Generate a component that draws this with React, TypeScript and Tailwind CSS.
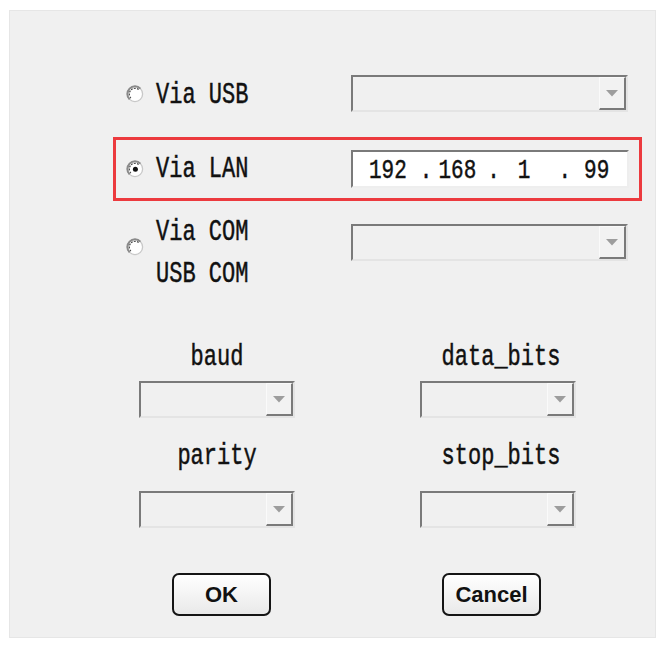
import React from "react";

const mono = "font-['Liberation_Mono','DejaVu_Sans_Mono',monospace] text-[22px] text-[#111] [-webkit-text-stroke:0.35px_#111]";

function Radio({ checked = false }: { checked?: boolean }) {
  return (
    <svg width="18" height="18" viewBox="0 0 18 18" className="shrink-0">
      <circle cx="9" cy="9" r="7.6" fill="#ffffff" stroke="#c8c8c8" strokeWidth="1.3" />
      <path d="M3.6 14.4 A7.6 7.6 0 0 1 14.4 3.6" stroke="#8a8a8a" strokeWidth="2" fill="none" />
      <path d="M4.9 13.1 A5.8 5.8 0 0 1 13.1 4.9" stroke="#3f3f3f" strokeWidth="1.1" fill="none" strokeDasharray="1.8 1.2" />
      {checked && <circle cx="9.4" cy="9.2" r="2.5" fill="#111" />}
    </svg>
  );
}

function Combo({ w }: { w: string }) {
  return (
    <div className={`${w} h-[37px] flex border-2 border-t-[#7a7a7a] border-l-[#7a7a7a] border-b-[#e4e4e4] border-r-[#e4e4e4] bg-[#f0f0f0]`}>
      <div className="flex-1" />
      <div className="w-[27px] h-full flex items-center justify-center border-t border-l border-t-[#fafafa] border-l-[#fafafa] border-b-2 border-r-2 border-b-[#7a7a7a] border-r-[#7a7a7a] bg-[#f2f2f2]">
        <svg width="12" height="7" viewBox="0 0 12 7">
          <polygon points="0,0 12,0 6,6.5" fill="#9d9d9d" />
        </svg>
      </div>
    </div>
  );
}

function Btn({ label }: { label: string }) {
  return (
    <div className="w-[99px] h-[43px] rounded-[7px] border-2 border-[#151515] bg-gradient-to-b from-[#ffffff] to-[#e9e9e9] flex items-center justify-center font-['Liberation_Sans',Arial,sans-serif] font-bold text-[22px] text-[#111] [-webkit-text-stroke:0px]">
      {label}
    </div>
  );
}

function T({ children }: { children: React.ReactNode }) {
  return <span className="inline-block scale-y-[1.3] whitespace-pre">{children}</span>;
}

export default function App() {
  return (
    <div className="w-[664px] h-[654px] bg-white pt-[10px] pl-[9px]">
      <div className={`w-[647px] h-[628px] bg-[#f0f0f0] border border-[#e6e6e6] ${mono}`}>
        <div className="pt-[64px] pl-[103px] w-[632px]">
          {/* USB row */}
          <div className="flex items-center h-[37px] pl-[13px] pr-[14px]">
            <Radio />
            <div className="ml-[12px] leading-none mt-[6px]"><T>Via USB</T></div>
            <div className="ml-auto">
              <Combo w="w-[277px]" />
            </div>
          </div>

          {/* LAN row */}
          <div className="mt-[25px] h-[64px] border-[3px] border-[#ec3a3e] flex items-center pl-[10px] pr-[10px]">
            <Radio checked />
            <div className="ml-[12px] leading-none mt-[4px]"><T>Via LAN</T></div>
            <div className="ml-auto w-[278px] h-[38px] bg-white border-2 border-t-[#7a7a7a] border-l-[#7a7a7a] border-b-[#eeeeee] border-r-[#eeeeee] flex items-center leading-none pt-[3px] text-[21px]">
              <span className="ml-[16px]"><T>192</T></span>
              <span className="ml-[13px]"><T>.</T></span>
              <span className="ml-[6px]"><T>168</T></span>
              <span className="ml-[11px]"><T>.</T></span>
              <span className="ml-[18px]"><T>1</T></span>
              <span className="ml-[28px]"><T>.</T></span>
              <span className="ml-[13px]"><T>99</T></span>
            </div>
          </div>

          {/* COM row */}
          <div className="mt-[12px] flex items-start pl-[13px] pr-[14px]">
            <div className="mt-[25px]"><Radio /></div>
            <div className="ml-[12px] leading-[42px]">
              <div><T>Via COM</T></div>
              <div><T>USB COM</T></div>
            </div>
            <div className="ml-auto mt-[11px]">
              <Combo w="w-[277px]" />
            </div>
          </div>
        </div>

        {/* serial settings */}
        <div className="mt-[44px] pl-[129px] grid grid-cols-[156px_156px] gap-x-[125px]">
          <div className="h-[30px] flex items-center justify-center leading-none pt-[4px]"><T>baud</T></div>
          <div className="h-[30px] flex items-center justify-center leading-none pl-[6px] pt-[4px]"><T>data_bits</T></div>
          <div className="mt-[10px]"><Combo w="w-[156px]" /></div>
          <div className="mt-[10px]"><Combo w="w-[156px]" /></div>
          <div className="mt-[24px] h-[30px] flex items-center justify-center leading-none"><T>parity</T></div>
          <div className="mt-[24px] h-[30px] flex items-center justify-center leading-none pl-[6px]"><T>stop_bits</T></div>
          <div className="mt-[19px]"><Combo w="w-[156px]" /></div>
          <div className="mt-[19px]"><Combo w="w-[156px]" /></div>
        </div>

        {/* buttons */}
        <div className="mt-[45px] pl-[162px] flex">
          <Btn label="OK" />
          <div className="ml-[171px]">
            <Btn label="Cancel" />
          </div>
        </div>
      </div>
    </div>
  );
}
